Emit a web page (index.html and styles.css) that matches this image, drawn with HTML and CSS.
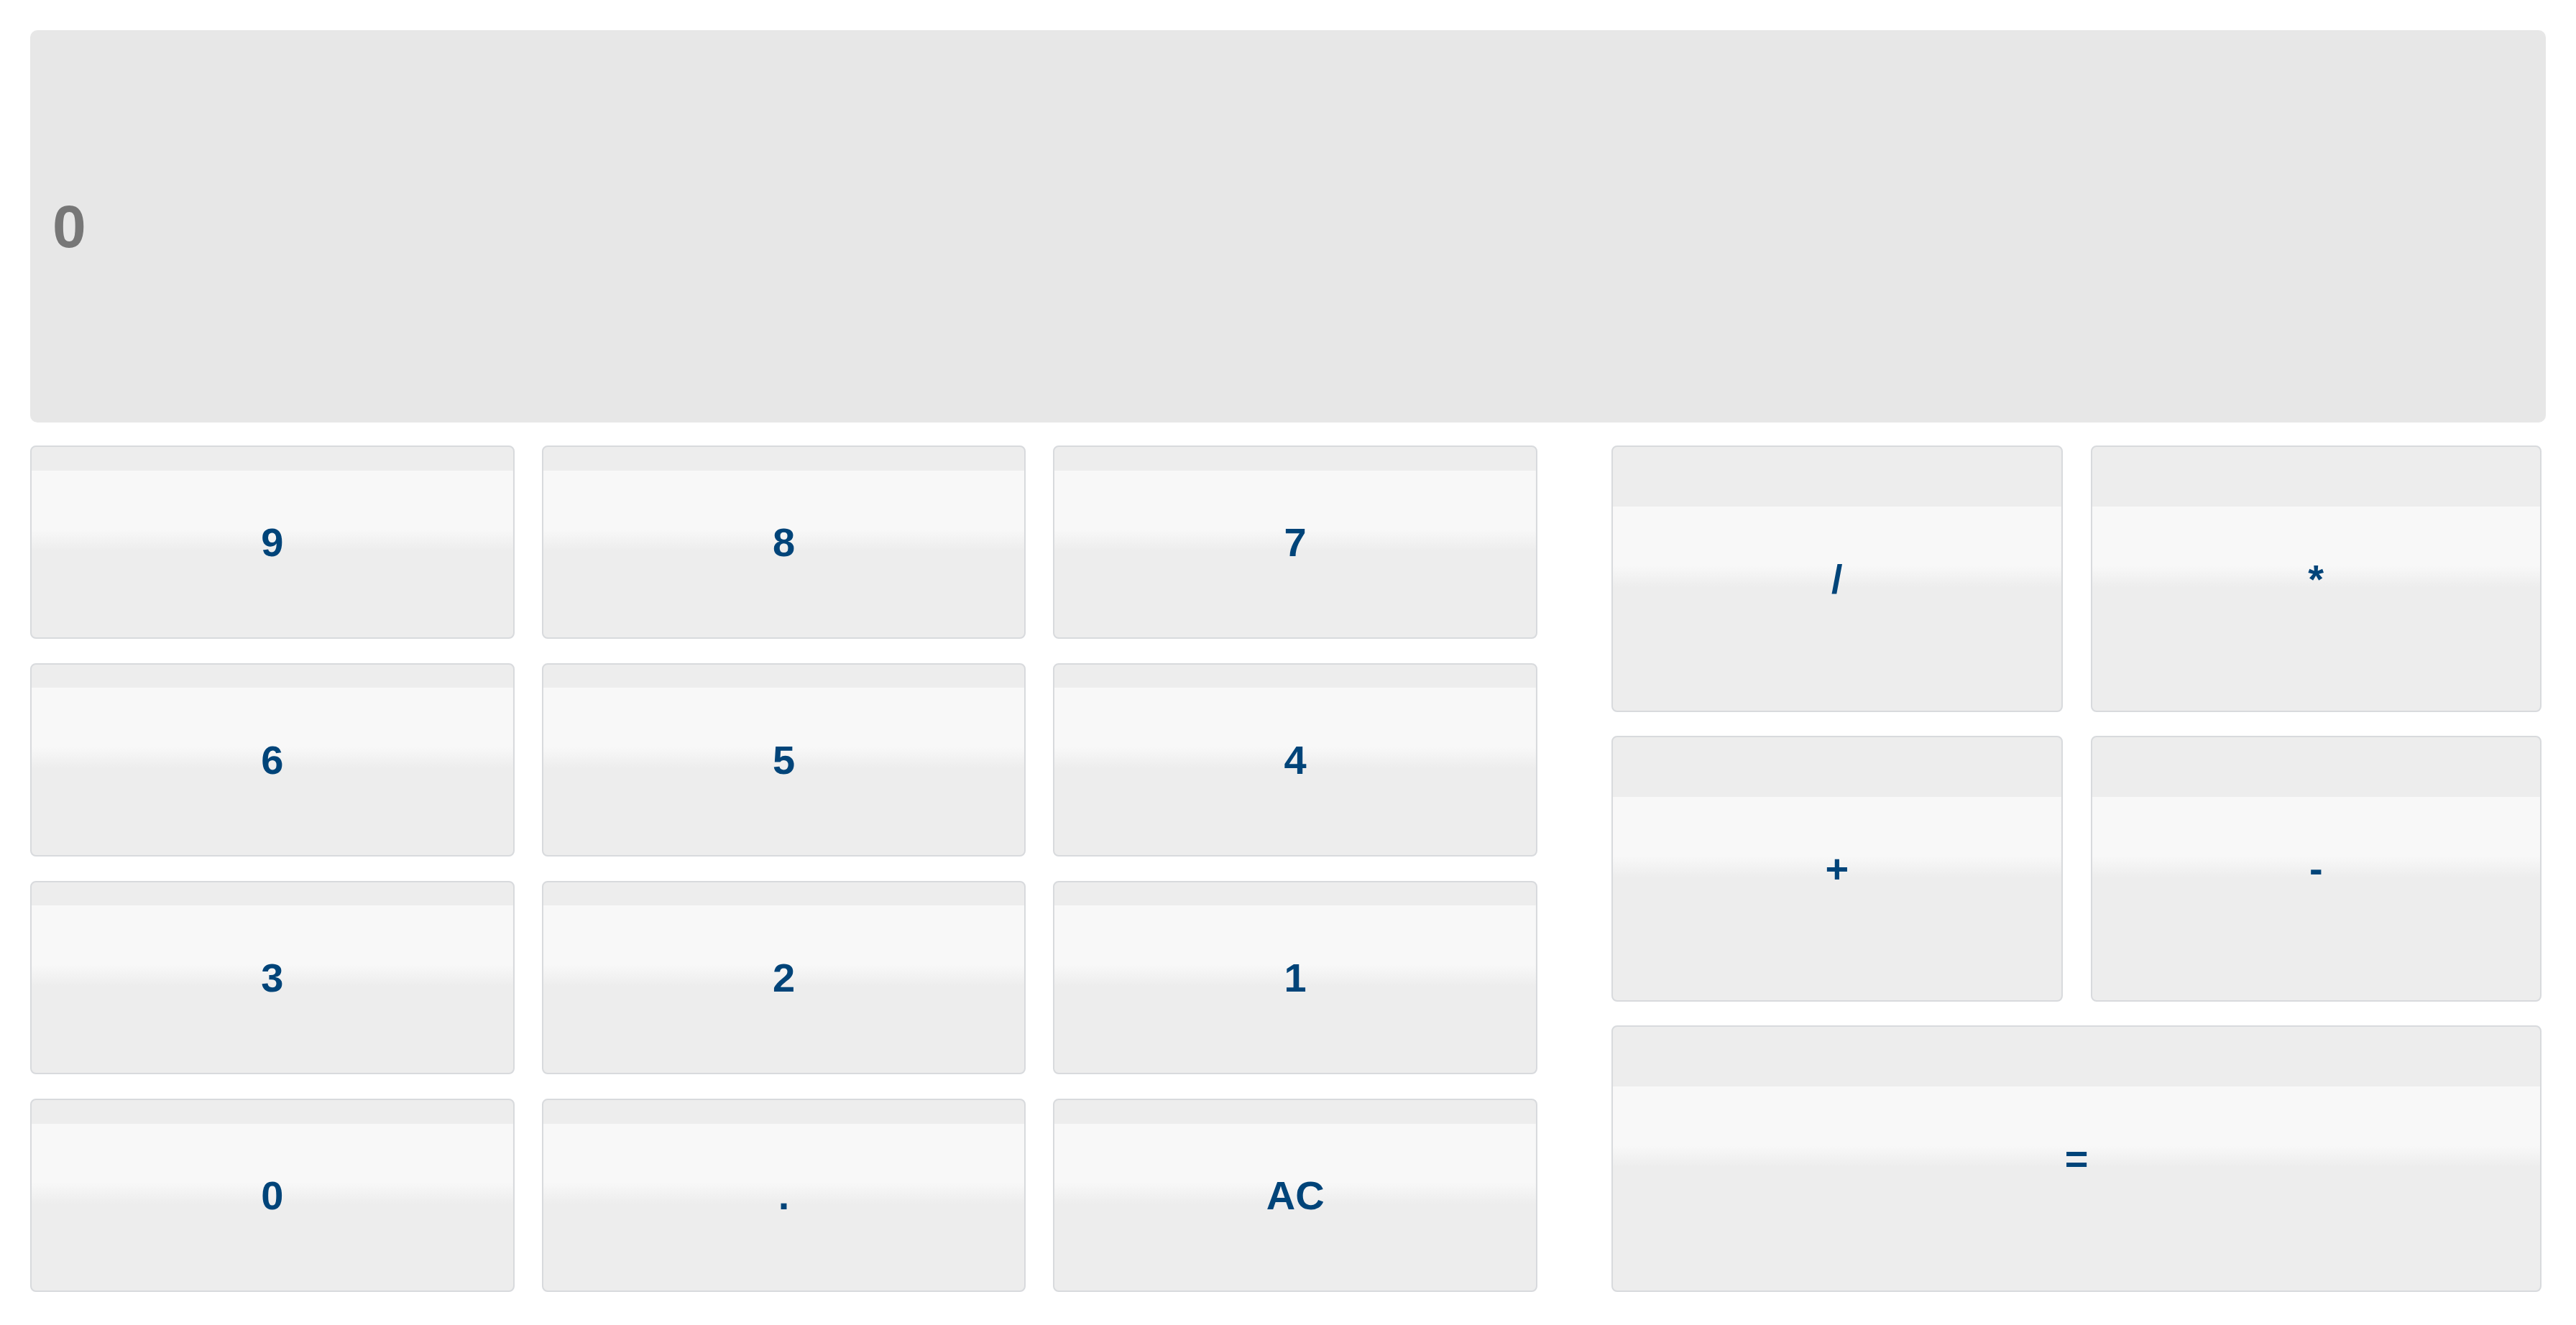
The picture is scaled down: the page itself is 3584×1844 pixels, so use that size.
FILE: index.html
```html
<!DOCTYPE html>
<html>
<head>
<meta charset="utf-8">
<title>Calculator</title>
<link rel="stylesheet" href="styles.css">
</head>
<body>
<div class="calc">
  <div class="display">0</div>
  <div class="keypad">
    <div class="digits">
      <button class="btn">9</button>
      <button class="btn">8</button>
      <button class="btn">7</button>
      <button class="btn">6</button>
      <button class="btn">5</button>
      <button class="btn">4</button>
      <button class="btn">3</button>
      <button class="btn">2</button>
      <button class="btn">1</button>
      <button class="btn">0</button>
      <button class="btn">.</button>
      <button class="btn">AC</button>
    </div>
    <div class="ops">
      <button class="btn">/</button>
      <button class="btn">*</button>
      <button class="btn">+</button>
      <button class="btn">-</button>
      <button class="btn btn-wide">=</button>
    </div>
  </div>
</div>
</body>
</html>
```

FILE: styles.css
```css
* { box-sizing: border-box; }

html, body {
  margin: 0;
  background: #ffffff;
}

.calc {
  padding: 42px;
  font-family: "Liberation Sans", Arial, sans-serif;
}

.display {
  height: 546px;
  background: #e7e7e7;
  border-radius: 10px;
  display: flex;
  align-items: center;
  padding-left: 31px;
  font-size: 84px;
  font-weight: bold;
  color: #777777;
}

.keypad {
  margin-top: 32px;
  display: grid;
  grid-template-columns: 2097px 1294px;
  column-gap: 103px;
}

.digits {
  display: grid;
  grid-template-columns: repeat(3, 1fr);
  grid-template-rows: repeat(4, 269px);
  column-gap: 38px;
  row-gap: 34px;
}

.ops {
  display: grid;
  grid-template-columns: repeat(2, 1fr);
  grid-template-rows: repeat(3, 1fr);
  column-gap: 39px;
  row-gap: 33px;
}

.btn {
  margin: 0;
  padding: 0;
  border: 2px solid #d8dadd;
  border-radius: 8px;
  background-color: #ededed;
  background-image: linear-gradient(to bottom,
    rgba(237,237,237,0) 0,
    rgba(237,237,237,0) 100px,
    #f8f8f8 100px,
    #f8f8f8 182px,
    #ededed 212px,
    #ededed 400px);
  background-size: 100% 400px;
  background-position: center center;
  background-repeat: no-repeat;
  display: flex;
  align-items: center;
  justify-content: center;
  font-family: "Liberation Sans", Arial, sans-serif;
  font-size: 56px;
  font-weight: bold;
  color: #004479;
  cursor: pointer;
}

.btn-wide {
  grid-column: 1 / span 2;
}
```
